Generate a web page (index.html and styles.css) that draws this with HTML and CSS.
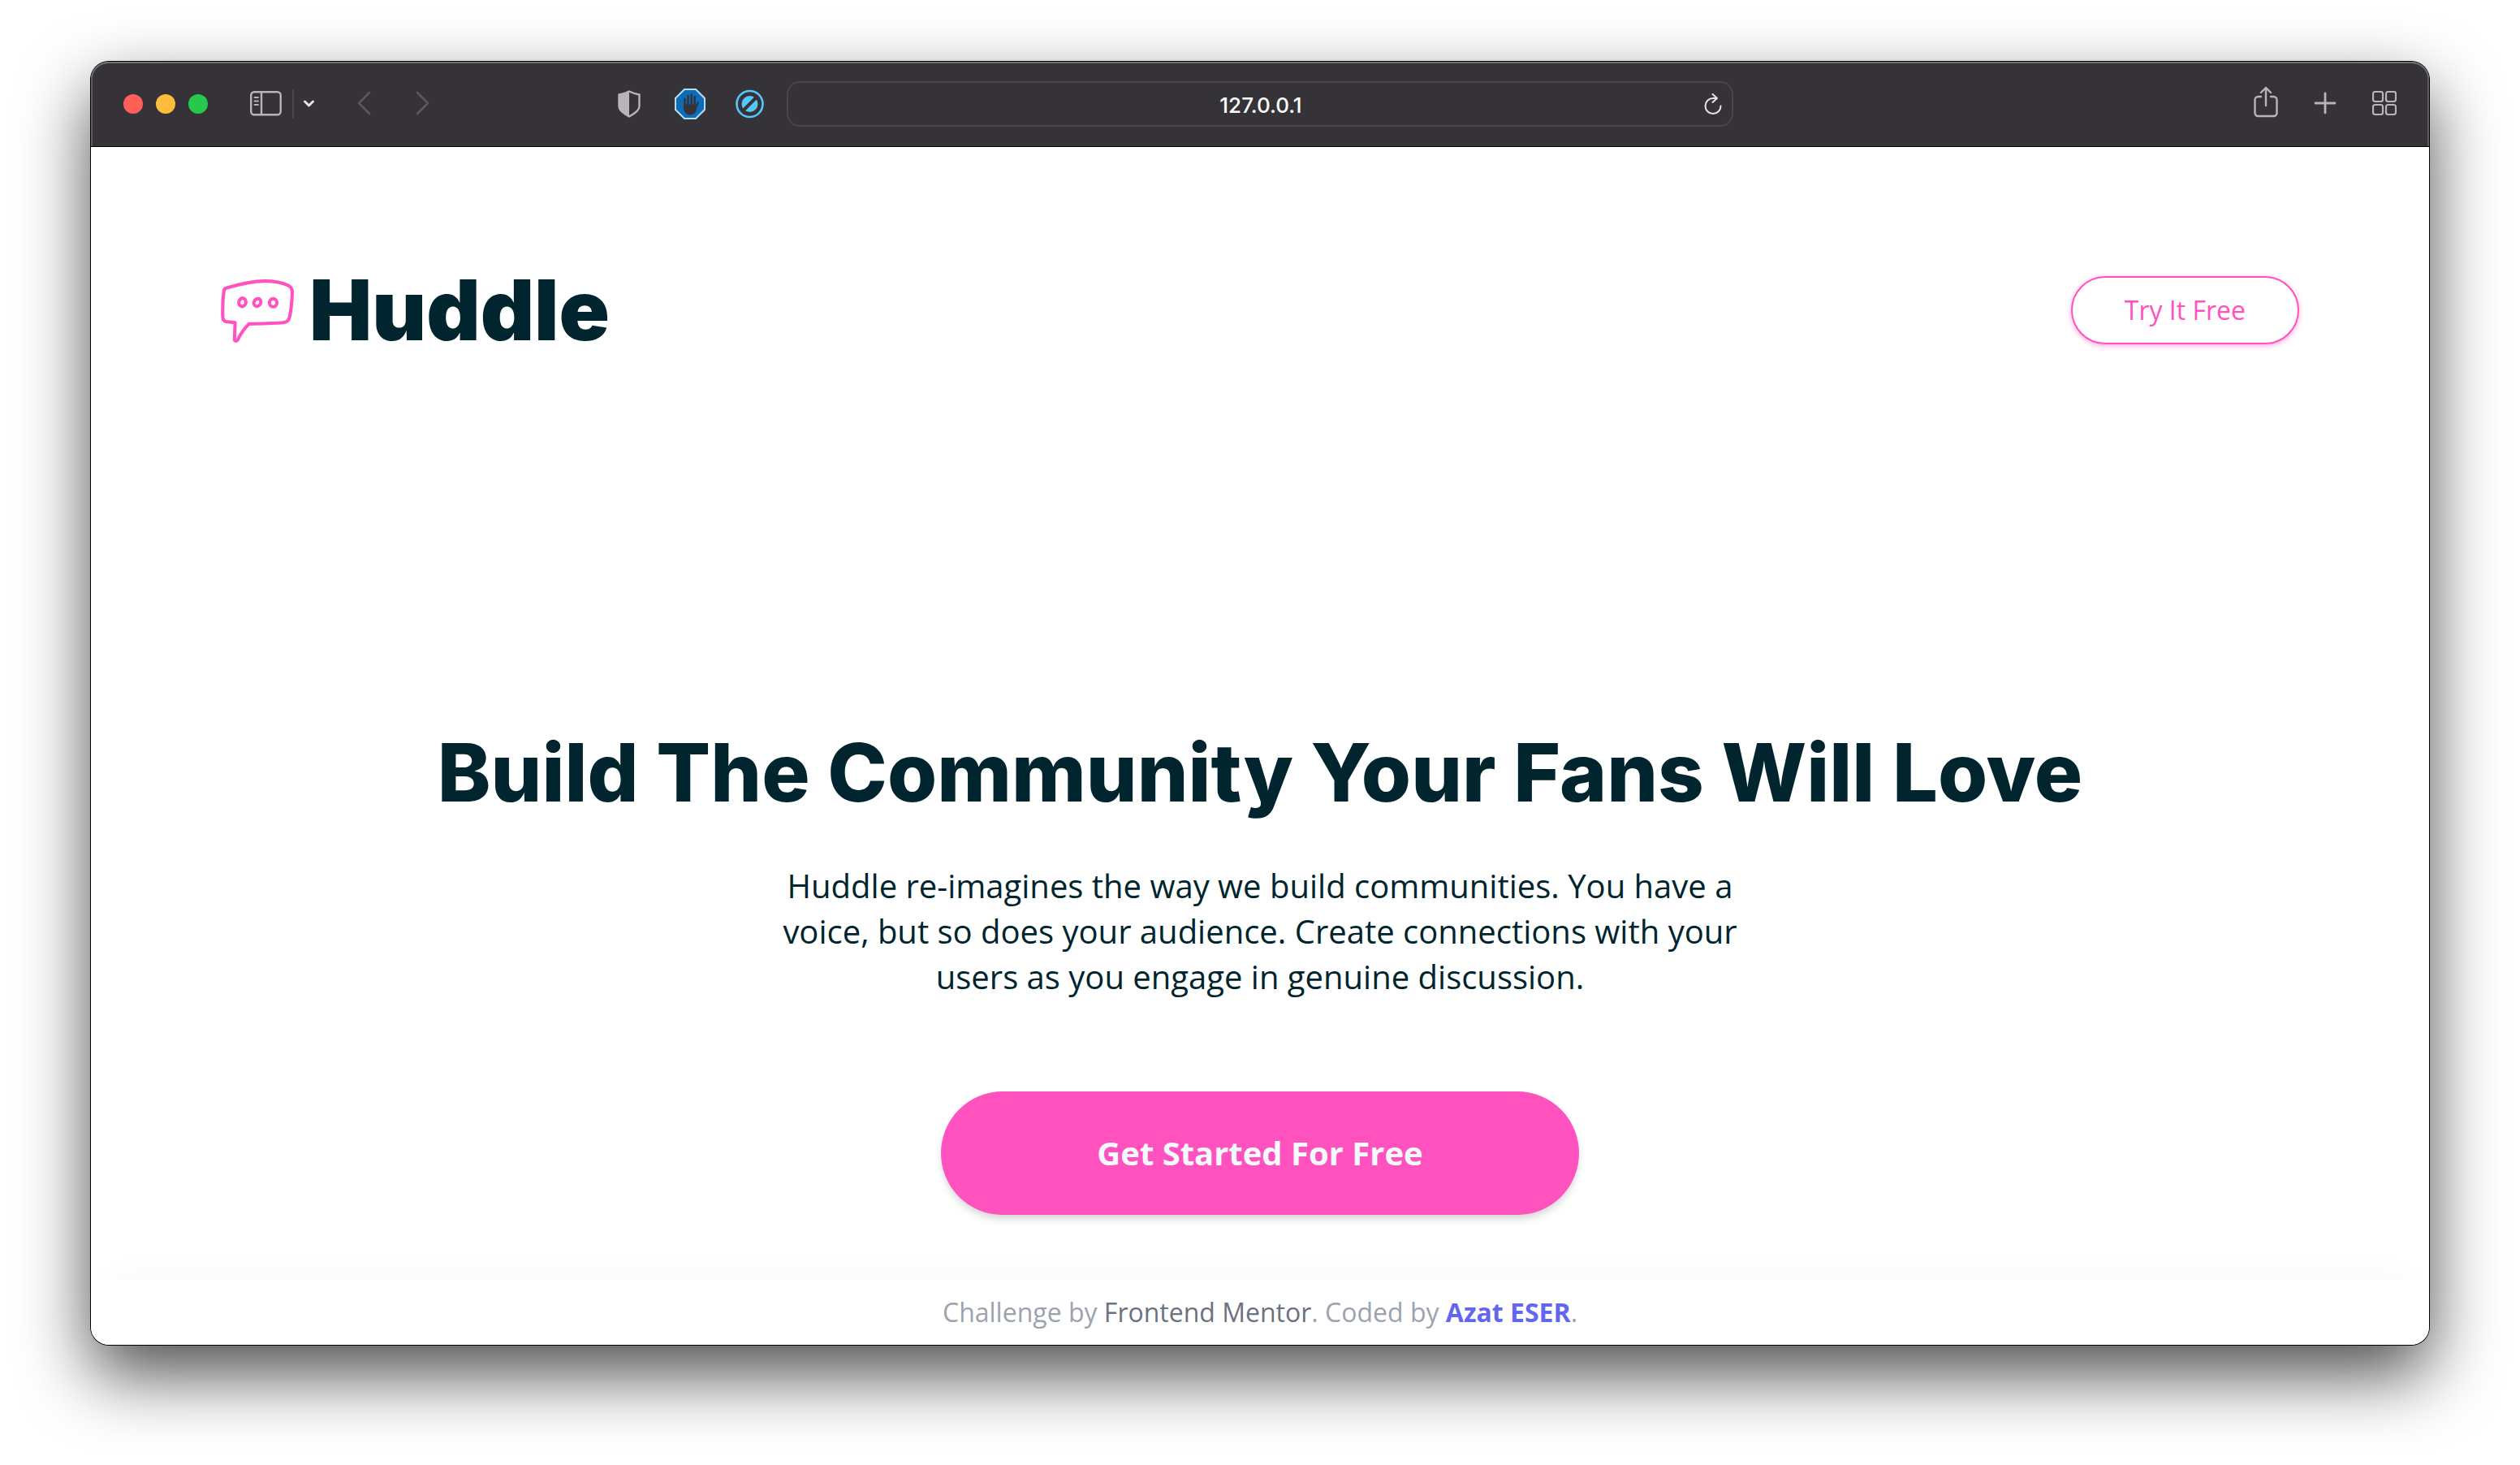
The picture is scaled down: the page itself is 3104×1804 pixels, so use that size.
FILE: index.html
```html
<!DOCTYPE html>
<html lang="en">
<head>
<meta charset="utf-8">
<meta name="viewport" content="width=device-width, initial-scale=1">
<title>Huddle</title>
<link rel="stylesheet" href="styles.css">
</head>
<body>
<div class="window">
  <div class="toolbar">
    <div class="toolbar-side">
      <div class="lights">
        <button class="light light-close" aria-label="Close"></button>
        <button class="light light-minimize" aria-label="Minimize"></button>
        <button class="light light-zoom" aria-label="Zoom"></button>
      </div>
      <div class="sidebar-tools">
        <button class="tool" aria-label="Sidebar">
          <svg width="40" height="32" viewBox="0 0 40 32" fill="none" stroke="#b8b5ba" stroke-width="2.400"><rect x="1.200" y="1.200" width="36.500" height="28" rx="4"/><path d="M14 1v28"/><path d="M5.500 8h4.500M5.500 12.500h4.500M5.500 17h4.500" stroke-width="1.800" stroke-linecap="round"/></svg>
        </button>
        <span class="divider"></span>
        <button class="tool" aria-label="Tab groups">
          <svg width="14" height="12" viewBox="1 0 14 12" fill="none" stroke="#e6e3e8" stroke-width="3" stroke-linecap="round" stroke-linejoin="round"><path d="M2.500 3l5 5 5-5"/></svg>
        </button>
      </div>
      <div class="history">
        <button class="tool" aria-label="Back">
          <svg width="18" height="32" viewBox="0 0 18 32" fill="none" stroke="#5b595e" stroke-width="2.600" stroke-linecap="round" stroke-linejoin="round"><path d="M15 2L2 15l13 13"/></svg>
        </button>
        <button class="tool" aria-label="Forward">
          <svg width="18" height="32" viewBox="0 0 18 32" fill="none" stroke="#5b595e" stroke-width="2.600" stroke-linecap="round" stroke-linejoin="round"><path d="M2 2l13 13L2 28"/></svg>
        </button>
      </div>
      <div class="extensions">
        <button class="tool" aria-label="Privacy report">
          <svg width="28" height="34" viewBox="0 0 28 34"><path d="M14 1.500C10 3.500 6 5 1.500 5.500V20c0 5 6 9 12.500 12.500C20.500 29 26.500 25 26.500 20V5.500C22 5 18 3.500 14 1.500z" fill="none" stroke="#b8b5ba" stroke-width="2.400"/><path d="M14 1C10 3.500 6 5 1 5.500V20c0 5 6 9 13 12.500z" fill="#b8b5ba"/></svg>
        </button>
        <button class="tool" aria-label="Ad blocker">
          <svg width="44" height="38" viewBox="-6 0 44 38"><path d="M12 1h14l11 11v14L26 37H12L1 26V12z" fill="#0b6cb8" stroke="#b5dcf8" stroke-width="2"/><path d="M12.400 25V13M16.500 20V9M20.600 20V7.500M24.700 20V10M25 25.500l3.800-8" fill="none" stroke="#363338" stroke-width="2.400" stroke-linecap="round"/><path d="M11.200 19.500H25.900V24l1.300 1.500c-1.300 5-4 7-8.200 7s-7.800-3.500-7.800-8z" fill="#363338"/></svg>
        </button>
        <button class="tool" aria-label="Content blocker">
          <svg width="36" height="36" viewBox="0 0 36 36"><circle cx="18.500" cy="18" r="16" fill="none" stroke="#56c7fb" stroke-width="2.600"/><circle cx="18.500" cy="18" r="10" fill="#56c7fb"/><path d="M9.500 27L27.500 9" stroke="#363338" stroke-width="4"/></svg>
        </button>
      </div>
    </div>
    <div class="address">
      <input class="address-input" type="text" value="127.0.0.1" aria-label="Address">
      <button class="tool" aria-label="Reload">
        <svg width="24" height="28" viewBox="0 0 24 28" fill="none" stroke="#e6e3e8" stroke-width="2" stroke-linecap="round" stroke-linejoin="round"><path d="M22.500 16.500a9.500 9.500 0 1 1-9.500-9.500h4.500M12.500 2l5.500 5-5.500 5"/></svg>
      </button>
    </div>
    <div class="toolbar-side toolbar-end">
      <button class="tool" aria-label="Share">
        <svg width="30" height="44" viewBox="0 0 30 44" fill="none" stroke="#b8b5ba" stroke-width="2.400" stroke-linecap="round" stroke-linejoin="round"><path d="M9 13H5.500a4 4 0 0 0-4 4v16a4 4 0 0 0 4 4h19a4 4 0 0 0 4-4V17a4 4 0 0 0-4-4H21M15 24V2M9 8l6-6 6 6"/></svg>
      </button>
      <button class="tool" aria-label="New tab">
        <svg width="28" height="30" viewBox="0 0 28 30" fill="none" stroke="#b8b5ba" stroke-width="2.800" stroke-linecap="round"><path d="M14 2v24M2 14h24"/></svg>
      </button>
      <button class="tool" aria-label="Tab overview">
        <svg width="30" height="32" viewBox="0 0 30 32" fill="none" stroke="#b8b5ba" stroke-width="2.200"><rect x="1" y="1" width="12" height="12" rx="2.500"/><rect x="17" y="1" width="12" height="12" rx="2.500"/><rect x="1" y="17" width="12" height="12" rx="2.500"/><rect x="17" y="17" width="12" height="12" rx="2.500"/></svg>
      </button>
    </div>
  </div>

  <div class="page">
    <header class="header">
      <a class="logo" href="#">
        <svg class="logo-mark" width="91" height="80" viewBox="0 0 88 78" fill="none" stroke="#ff52bf" stroke-width="4" stroke-linejoin="round"><path d="M6 12.500C24 7 38 4 52 4c12 0 22 2 29 5.500 3 1.700 4.500 4 4.400 8-.4 12-1.400 23-3.600 31-1 3.500-3 5-7 5.300-12 1-27 1.300-41.500 1.700C27 62 23 68 20 74.500c-1 2-4.200 1.700-4 0l.8-20.500-11-1.400C3 52 2 50 2 47c-.4-11-.2-21 1.300-31 .4-2 1.200-3 2.700-3.500z"/><ellipse cx="25.500" cy="29.500" rx="4.200" ry="5" transform="rotate(12 25.500 29.500)"/><ellipse cx="43.500" cy="29.700" rx="4" ry="4.800" transform="rotate(28 43.500 29.700)"/><ellipse cx="62.500" cy="30" rx="4.500" ry="4.800"/></svg>
        <span class="logo-text">Huddle</span>
      </a>
      <button class="try-button">Try It Free</button>
    </header>
    <main class="hero">
      <h1 class="hero-title">Build The Community Your Fans Will Love</h1>
      <p class="hero-text">Huddle re-imagines the way we build communities. You have a voice, but so does your audience. Create connections with your users as you engage in genuine discussion.</p>
      <button class="start-button">Get Started For Free</button>
    </main>
    <footer class="footer">
      <p class="credit">Challenge by <a class="credit-link" href="#">Frontend Mentor</a>. Coded by <a class="credit-author" href="#">Azat ESER</a>.</p>
    </footer>
  </div>
</div>
</body>
</html>
```
FILE: styles.css
```css
* {
  box-sizing: border-box;
}

body {
  margin: 0;
  min-height: 100vh;
  padding: 76px 112px 148px;
  display: flex;
  flex-direction: column;
  background: #fff;
  color: #00252e;
  font-family: "Open Sans", sans-serif;
}

button {
  font: inherit;
  cursor: pointer;
}

a {
  color: inherit;
  text-decoration: none;
}

svg {
  display: block;
}

.window {
  flex: 1;
  display: flex;
  flex-direction: column;
  border-radius: 22px;
  background: #fff;
  box-shadow: 0 0 0 1px #000, 0 36px 86px rgba(0, 0, 0, 0.7);
}

.toolbar {
  display: grid;
  grid-template-columns: 1fr minmax(auto, 1166px) 1fr;
  align-items: center;
  height: 105px;
  background: #363338;
  border-bottom: 1px solid #000;
  border-radius: 22px 22px 0 0;
  box-shadow: inset 0 2px #737175, inset 2px 0 #5d5b5f, inset -2px 0 #5d5b5f;
}

.toolbar-side {
  display: flex;
  align-items: center;
  padding-left: 40px;
}

.toolbar-end {
  justify-content: flex-end;
  gap: 44px;
  padding-right: 40px;
}

.tool {
  padding: 0;
  border: 0;
  background: none;
}

.lights {
  display: flex;
  gap: 16px;
}

.light {
  width: 24px;
  height: 24px;
  padding: 0;
  border: 0;
  border-radius: 50%;
}

.light-close {
  background: #ff5f57;
}

.light-minimize {
  background: #febc3c;
}

.light-zoom {
  background: #28c84c;
}

.sidebar-tools {
  display: flex;
  align-items: center;
  gap: 12px;
  margin-left: 52px;
}

.divider {
  width: 2px;
  height: 36px;
  background: #4a474c;
}

.history {
  display: flex;
  gap: 54px;
  margin-left: 52px;
}

.extensions {
  display: flex;
  align-items: center;
  gap: 36px;
  margin-left: auto;
  padding-right: 28px;
}

.address {
  display: flex;
  align-items: center;
  height: 56px;
  padding: 0 12px 0 38px;
  border: 2px solid #4a474c;
  border-radius: 16px;
}

.address-input {
  flex: 1;
  min-width: 0;
  padding: 2px 0 0;
  border: 0;
  background: none;
  color: #fff;
  font-family: Inter, sans-serif;
  font-size: 26px;
  font-weight: 500;
  text-align: center;
}

.page {
  flex: 1;
  display: flex;
  flex-direction: column;
}

.header {
  display: flex;
  align-items: center;
  justify-content: space-between;
  padding: 159px 160px 0;
}

.logo {
  display: flex;
  align-items: center;
  gap: 18px;
}

.logo-text {
  font-family: Inter, sans-serif;
  font-size: 103px;
  font-weight: 900;
  line-height: 84px;
}

.try-button {
  height: 84px;
  padding: 0 64px 2px;
  border: 2px solid #ff52bf;
  border-radius: 42px;
  background: #fff;
  color: #ff52bf;
  font-size: 32px;
  box-shadow: 0 2px 6px rgba(255, 82, 191, 0.5);
}

.hero {
  flex: 1;
  display: flex;
  flex-direction: column;
  align-items: center;
  justify-content: flex-end;
  padding: 80px;
}

.hero-title {
  margin: 0 0 64px;
  font-family: Inter, sans-serif;
  font-size: 99px;
  font-weight: 800;
  line-height: 96px;
  text-align: center;
}

.hero-text {
  max-width: 1200px;
  margin: 0 0 113px;
  font-size: 40px;
  line-height: 56px;
  text-align: center;
}

.start-button {
  height: 152px;
  padding: 0 192px 2px;
  border: 0;
  border-radius: 76px;
  background: #ff52bf;
  color: #f5faff;
  font-size: 40px;
  font-weight: 700;
  box-shadow: 0 8px 12px -2px rgba(0, 0, 0, 0.1), 0 4px 8px -2px rgba(0, 0, 0, 0.1);
}

.footer {
  padding: 16px;
  border-radius: 0 0 22px 22px;
  background: #fff;
  box-shadow: 0 -20px 50px -24px rgba(0, 0, 0, 0.05);
}

.credit {
  margin: 0;
  color: #9ca3af;
  font-size: 32px;
  line-height: 48px;
  text-align: center;
}

.credit-link {
  color: #6b7280;
}

.credit-author {
  color: #6366f1;
  font-weight: 700;
}
```
